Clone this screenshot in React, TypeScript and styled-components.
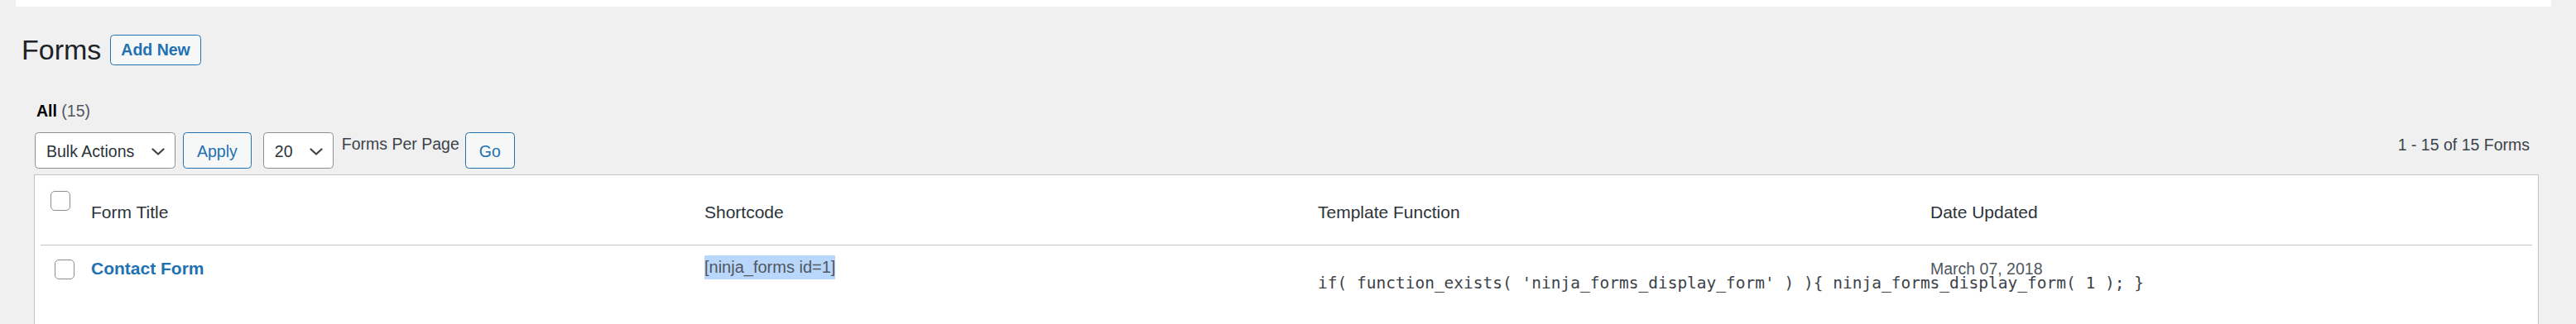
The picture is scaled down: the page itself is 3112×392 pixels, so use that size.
import React from "react";
import styled, { createGlobalStyle } from "styled-components";

const GlobalStyle = createGlobalStyle`
  html, body {
    margin: 0;
    padding: 0;
    background: #f0f0f1;
  }
  body {
    font-family: "Liberation Sans", Arial, sans-serif;
    color: #3c434a;
  }
  * { box-sizing: border-box; }
`;

const Page = styled.div`
  height: 392px;
  overflow: hidden;
  padding: 0 30px 0 19px;
  display: flex;
  flex-direction: column;
  background: #f0f0f1;
`;

const TopBar = styled.div`
  height: 8px;
  background: #ffffff;
  flex: none;
`;

const TitleRow = styled.div`
  display: flex;
  align-items: center;
  margin-top: 30px;
  padding-left: 7px;
`;

const Title = styled.h1`
  margin: 0;
  font-size: 34px;
  line-height: 44px;
  font-weight: 400;
  color: #1d2327;
`;

const TitleAction = styled.a`
  margin-left: 11px;
  height: 37px;
  padding: 0 12px;
  display: inline-flex;
  align-items: center;
  border: 1px solid #2271b1;
  border-radius: 4.5px;
  background: #f6f7f7;
  color: #2271b1;
  font-size: 19.5px;
  font-weight: 600;
  text-decoration: none;
`;

const Content = styled.div`
  flex: 1;
  display: flex;
  flex-direction: column;
  padding: 0 15px 0 22px;
  min-height: 0;
`;

const Views = styled.div`
  margin: 38px 0 0 3px;
  font-size: 19.5px;
  line-height: 28px;
  color: #50575e;
`;

const Current = styled.span`
  color: #000;
  font-weight: 600;
`;

const Tablenav = styled.div`
  margin: 12px 0 0 1px;
  height: 44px;
  display: flex;
  align-items: flex-start;
`;

const Select = styled.div<{ $width: number; $gap?: number }>`
  width: ${(p) => p.$width}px;
  margin-left: ${(p) => p.$gap ?? 0}px;
  height: 44px;
  padding: 2px 12px 0 13px;
  display: flex;
  align-items: center;
  justify-content: space-between;
  background: #fff;
  border: 1px solid #8c8f94;
  border-radius: 4.5px;
  font-size: 19.5px;
  color: #2c3338;
  flex: none;
`;

const Button = styled.button<{ $gap: number }>`
  margin-left: ${(p) => p.$gap}px;
  height: 44px;
  padding: 2px 16px 0;
  background: #f6f7f7;
  border: 1px solid #2271b1;
  border-radius: 4.5px;
  color: #2271b1;
  font-family: inherit;
  font-size: 19.5px;
  flex: none;
`;

const NavLabel = styled.span`
  margin-left: 10px;
  font-size: 19.5px;
  line-height: 28px;
  color: #3c434a;
  white-space: nowrap;
`;

const Pagination = styled.span`
  margin: 1px 11px 0 auto;
  font-size: 19.5px;
  line-height: 28px;
  color: #3c434a;
`;

const Table = styled.div`
  margin-top: 7px;
  flex: 1;
  background: #fff;
  border: 1px solid #c3c4c7;
  border-bottom: none;
  padding: 0 7px;
`;

const columns = "61px 741px 741px 740px 1fr";

const HeadRow = styled.div`
  display: grid;
  grid-template-columns: ${columns};
  align-items: start;
  height: 85px;
  padding-top: 19px;
  border-bottom: 1px solid #c3c4c7;
`;

const BodyRow = styled.div`
  display: grid;
  grid-template-columns: ${columns};
  align-items: start;
  padding-top: 12px;
`;

const Checkbox = styled.span<{ $left: number; $top: number }>`
  display: block;
  width: 24px;
  height: 24px;
  margin: ${(p) => p.$top}px 0 0 ${(p) => p.$left}px;
  border: 1px solid #8c8f94;
  border-radius: 5px;
  background: #fff;
`;

const HeadCell = styled.div`
  padding-top: 11px;
  font-size: 21px;
  line-height: 30px;
  color: #2c3338;
  white-space: nowrap;
`;

const FormLink = styled.a`
  margin-top: 1px;
  font-size: 21px;
  line-height: 30px;
  font-weight: 600;
  color: #2271b1;
  text-decoration: none;
  white-space: nowrap;
`;

const Shortcode = styled.div`
  justify-self: start;
  background: #b9d6fb;
  font-size: 20px;
  line-height: 29px;
  color: #50575e;
  white-space: nowrap;
`;

const Code = styled.code`
  display: block;
  padding-top: 20px;
  font-family: "DejaVu Sans Mono", "Liberation Mono", monospace;
  font-size: 19.5px;
  line-height: 28px;
  color: #3c434a;
  white-space: pre;
`;

const DateCell = styled.div`
  padding-top: 2px;
  font-size: 19.5px;
  line-height: 28px;
  color: #50575e;
  white-space: nowrap;
`;

const Chevron = () => (
  <svg width="16" height="9" viewBox="0 0 16 9" fill="none">
    <polyline
      points="1.5,1.5 8,7.5 14.5,1.5"
      stroke="#3c434a"
      strokeWidth="2.2"
      strokeLinecap="round"
      strokeLinejoin="round"
    />
  </svg>
);

export default function App() {
  return (
    <>
      <GlobalStyle />
      <Page>
        <TopBar />
        <TitleRow>
          <Title>Forms</Title>
          <TitleAction href="#">Add New</TitleAction>
        </TitleRow>
        <Content>
          <Views>
            <Current>All</Current> (15)
          </Views>
          <Tablenav>
            <Select $width={170}>
              <span>Bulk Actions</span>
              <Chevron />
            </Select>
            <Button $gap={9}>Apply</Button>
            <Select $width={85} $gap={14}>
              <span>20</span>
              <Chevron />
            </Select>
            <NavLabel>Forms Per Page</NavLabel>
            <Button $gap={7}>Go</Button>
            <Pagination>1 - 15 of 15 Forms</Pagination>
          </Tablenav>
          <Table>
            <HeadRow>
              <Checkbox $left={12} $top={0} />
              <HeadCell>Form Title</HeadCell>
              <HeadCell>Shortcode</HeadCell>
              <HeadCell>Template Function</HeadCell>
              <HeadCell>Date Updated</HeadCell>
            </HeadRow>
            <BodyRow>
              <Checkbox $left={17} $top={5} />
              <FormLink href="#">Contact Form</FormLink>
              <Shortcode>[ninja_forms id=1]</Shortcode>
              <Code>{"if( function_exists( 'ninja_forms_display_form' ) ){ ninja_forms_display_form( 1 ); }"}</Code>
              <DateCell>March 07, 2018</DateCell>
            </BodyRow>
          </Table>
        </Content>
      </Page>
    </>
  );
}
